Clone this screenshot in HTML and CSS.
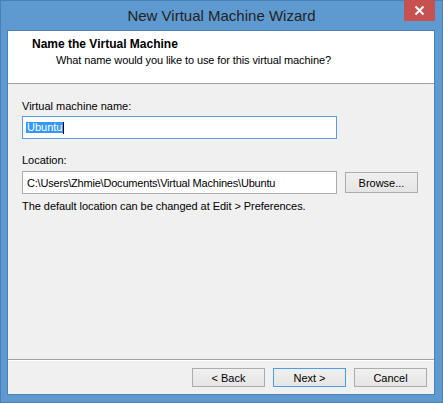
FILE: index.html
```html
<!DOCTYPE html>
<html lang="en">
<head>
<meta charset="utf-8">
<title>New Virtual Machine Wizard</title>
<link rel="stylesheet" href="styles.css">
</head>
<body>
<div class="window">
  <div class="titlebar">
    <div class="title">New Virtual Machine Wizard</div>
    <div class="close" aria-label="Close">
      <svg width="11" height="11" viewBox="0 0 11 11"><path d="M1.5 1.5 L9.5 9.5 M9.5 1.5 L1.5 9.5" stroke="#fff" stroke-width="2" fill="none"/></svg>
    </div>
  </div>
  <div class="client">
    <div class="header">
      <div class="h-title">Name the Virtual Machine</div>
      <div class="h-sub">What name would you like to use for this virtual machine?</div>
    </div>
    <div class="body">
      <div class="label">Virtual machine name:</div>
      <div class="textbox focused"><span class="sel">Ubuntu</span><span class="caret"></span></div>
      <div class="label loc-label">Location:</div>
      <div class="row">
        <div class="textbox path">C:\Users\Zhmie\Documents\Virtual Machines\Ubuntu</div>
        <div class="btn browse">Browse...</div>
      </div>
      <div class="note">The default location can be changed at Edit &gt; Preferences.</div>
    </div>
    <div class="footer">
      <div class="btn">&lt; Back</div>
      <div class="btn default">Next &gt;</div>
      <div class="btn">Cancel</div>
    </div>
  </div>
</div>
</body>
</html>
```
FILE: styles.css
```css
* { box-sizing: border-box; }
html, body { margin: 0; padding: 0; }
body {
  width: 443px;
  height: 403px;
  font-family: "Liberation Sans", Arial, sans-serif;
  font-size: 11px;
  color: #000;
  overflow: hidden;
}
.window {
  width: 443px;
  height: 403px;
  border: 1px solid #4a80b3;
  background: #5e9ad0;
  display: flex;
  flex-direction: column;
}
.titlebar {
  height: 29px;
  display: grid;
  grid-template-columns: 1fr auto 1fr;
  align-items: start;
}
.title {
  grid-column: 2;
  font-size: 15px;
  line-height: 29px;
  color: #232323;
  white-space: nowrap;
}
.close {
  grid-column: 3;
  justify-self: end;
  width: 31px;
  height: 21px;
  margin-top: -1px;
  margin-right: 7px;
  background: #c75050;
  display: flex;
  align-items: center;
  justify-content: center;
}
.close svg { display: block; }
.client {
  flex: 1;
  margin: 0 7px 7px 6px;
  border: 1px solid #4c82b5;
  background: #f0f0f0;
  display: flex;
  flex-direction: column;
}
.header {
  height: 53px;
  background: #fff;
  border-bottom: 1px solid #a0a0a0;
  padding: 6px 0 0 24px;
}
.h-title {
  font-size: 12px;
  font-weight: bold;
  line-height: 15px;
}
.h-sub {
  margin-top: 1px;
  padding-left: 24px;
  line-height: 15px;
  letter-spacing: -0.1px;
}
.body {
  flex: 1;
  padding: 15px 0 0 14px;
}
.label { line-height: 15px; }
.loc-label { margin-top: 14px; }
.textbox {
  width: 315px;
  height: 23px;
  margin-top: 2px;
  border: 1px solid #abadb3;
  background: #fff;
  padding-left: 4px;
  display: flex;
  align-items: center;
  white-space: nowrap;
}
.textbox.path { letter-spacing: -0.2px; }
.textbox.focused {
  border-color: #569de5;
  padding-left: 3px;
}
.sel {
  background: #3399ff;
  color: #fff;
  line-height: 11px;
  padding: 0 1px 0 1px;
}
.caret {
  width: 1px;
  height: 12px;
  background: #000;
}
.row {
  margin-top: 3px;
  display: flex;
  align-items: center;
  gap: 8px;
}
.row .textbox { margin-top: 0; }
.note {
  margin-top: 5px;
  line-height: 15px;
  letter-spacing: -0.05px;
}
.btn {
  width: 73px;
  height: 19px;
  border: 1px solid #acacac;
  background: linear-gradient(#f0f0f0, #e5e5e5);
  display: flex;
  align-items: center;
  justify-content: center;
  white-space: nowrap;
}
.btn.browse { height: 21px; }
.btn.default { border-color: #4d9ee6; }
.footer {
  height: 35px;
  border-top: 1px solid #a0a0a0;
  box-shadow: inset 0 1px 0 #fff;
  padding: 8px 7px 0 0;
  display: flex;
  justify-content: flex-end;
  align-items: flex-start;
  gap: 8px;
}
```
